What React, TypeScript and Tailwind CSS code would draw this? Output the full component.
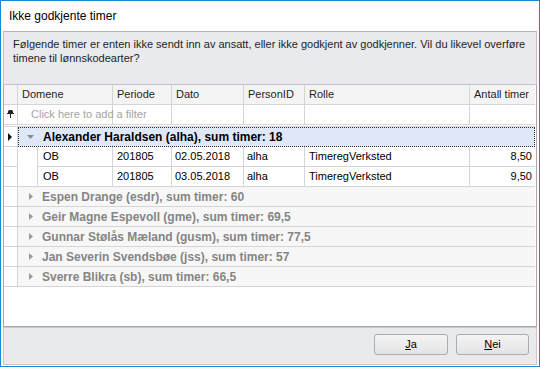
const cols = [
  { label: 'Domene', w: 'w-[95px]' },
  { label: 'Periode', w: 'w-[59px]' },
  { label: 'Dato', w: 'w-[72px]' },
  { label: 'PersonID', w: 'w-[61px]' },
  { label: 'Rolle', w: 'w-[165px]' },
  { label: 'Antall timer', w: 'flex-1' },
]

const rows = [
  { domene: 'OB', periode: '201805', dato: '02.05.2018', person: 'alha', rolle: 'TimeregVerksted', timer: '8,50' },
  { domene: 'OB', periode: '201805', dato: '03.05.2018', person: 'alha', rolle: 'TimeregVerksted', timer: '9,50' },
]

const groups = [
  'Espen Drange (esdr), sum timer: 60',
  'Geir Magne Espevoll (gme), sum timer: 69,5',
  'Gunnar Stølås Mæland (gusm), sum timer: 77,5',
  'Jan Severin Svendsbøe (jss), sum timer: 57',
  'Sverre Blikra (sb), sum timer: 66,5',
]

const FilterPin = () => (
  <svg width="7" height="9" viewBox="0 0 7 9">
    <rect x="1" y="0" width="5" height="4" rx="1.5" fill="#222" />
    <rect x="0" y="3" width="7" height="1" fill="#222" />
    <rect x="3" y="4" width="1" height="4" fill="#222" />
  </svg>
)

const App = () => {
  return (
    <div className="w-[540px] h-[367px] bg-white border border-[#1a86d6] flex flex-col font-['Liberation_Sans',Arial,sans-serif] text-[#1e1e1e] overflow-hidden">
      <div className="h-[30px] shrink-0 flex items-center pl-[8px] text-[12px] text-black">Ikke godkjente timer</div>

      <div className="flex-1 flex flex-col px-[2px] pb-[1px]">
        {/* message */}
        <div className="h-[54px] shrink-0 bg-[#e9eaee] border border-[#c3c3c3] border-t-[#b4b4b4] px-[9px] pt-[5px] text-[11px] leading-[14px]">
          Følgende timer er enten ikke sendt inn av ansatt, eller ikke godkjent av godkjenner. Vil du likevel overføre timene til lønnskodearter?
        </div>

        {/* grid */}
        <div className="h-[242px] shrink-0 border border-[#a9a9a9] border-t-0 bg-white flex flex-col text-[11px] pr-[1px]">
          <div className="h-[20px] flex border-b border-[#d5d5d5] bg-[#f4f4f4]">
            <div className="w-[14px] border-r border-[#d5d5d5]" />
            {cols.map((c, i) => (
              <div
                key={c.label}
                className={`${c.w} flex items-center pl-[4px] ${i < cols.length - 1 ? 'border-r border-[#d5d5d5]' : ''}`}
              >
                {c.label}
              </div>
            ))}
          </div>

          <div className="h-[20px] flex border-b border-[#d5d5d5]">
            <div className="w-[14px] border-r border-[#d5d5d5] flex items-center justify-center">
              <FilterPin />
            </div>
            {cols.map((c, i) => (
              <div
                key={c.label}
                className={`${c.w} relative flex items-center ${i < cols.length - 1 ? 'border-r border-[#d5d5d5]' : ''}`}
              >
                {i === 0 && (
                  <span className="absolute left-[13px] whitespace-nowrap text-[#a3a3a3]">Click here to add a filter</span>
                )}
              </div>
            ))}
          </div>
          <div className="h-[2px] border-b border-[#d5d5d5]" />

          {/* expanded group */}
          <div className="h-[20px] flex">
            <div className="w-[14px] border-r border-b border-[#d5d5d5] flex items-center justify-center">
              <svg width="5" height="8" viewBox="0 0 5 8">
                <path d="M0 0 L4 4 L0 8 Z" fill="#111" />
              </svg>
            </div>
            <div className="flex-1 flex items-center bg-[#dfe8f8] border border-dotted border-[#333] font-bold text-[12px] text-black">
              <svg width="7" height="4" viewBox="0 0 7 4" className="ml-[8px] mr-[9px]">
                <path d="M0 0 L7 0 L3.5 4 Z" fill="#8c8c8c" />
              </svg>
              Alexander Haraldsen (alha), sum timer: 18
            </div>
          </div>

          {rows.map((r, idx) => (
            <div key={r.dato} className="h-[20px] flex text-black">
              <div className="w-[14px] border-r border-b border-[#d5d5d5]" />
              <div className={`w-[20px] border-r border-[#d5d5d5] ${idx === rows.length - 1 ? 'border-b' : ''}`} />
              <div className="w-[75px] flex items-center pl-[5px] border-r border-b border-[#d5d5d5]">{r.domene}</div>
              <div className="w-[59px] flex items-center pl-[4px] border-r border-b border-[#d5d5d5]">{r.periode}</div>
              <div className="w-[72px] flex items-center pl-[3px] border-r border-b border-[#d5d5d5]">{r.dato}</div>
              <div className="w-[61px] flex items-center pl-[3px] border-r border-b border-[#d5d5d5]">{r.person}</div>
              <div className="w-[165px] flex items-center pl-[4px] border-r border-b border-[#d5d5d5]">{r.rolle}</div>
              <div className="flex-1 flex items-center justify-end pr-[3px] border-b border-[#d5d5d5]">{r.timer}</div>
            </div>
          ))}

          {groups.map((g) => (
            <div key={g} className="h-[20px] flex">
              <div className="w-[14px] border-r border-b border-[#d5d5d5]" />
              <div className="flex-1 flex items-center bg-[#f7f7f7] border-b border-[#d5d5d5] font-bold text-[12px] text-[#858585]">
                <svg width="4" height="7" viewBox="0 0 4 7" className="ml-[11px] mr-[9px]">
                  <path d="M0 0 L4 3.5 L0 7 Z" fill="#9a9a9a" />
                </svg>
                {g}
              </div>
            </div>
          ))}
        </div>

        {/* footer */}
        <div className="flex-1 bg-[#e9eaee] border border-[#c8c8c8] flex items-start justify-end gap-[8px] pt-[6px] pr-[7px]">
          <button className="w-[74px] h-[21px] rounded-[3px] border border-[#acacac] bg-gradient-to-b from-[#f4f4f4] to-[#e4e4e4] text-[11px] text-black">
            <span className="underline underline-offset-1">J</span>a
          </button>
          <button className="w-[73px] h-[21px] rounded-[3px] border border-[#acacac] bg-gradient-to-b from-[#f4f4f4] to-[#e4e4e4] text-[11px] text-black">
            <span className="underline underline-offset-1">N</span>ei
          </button>
        </div>
      </div>
    </div>
  )
}

export default App
